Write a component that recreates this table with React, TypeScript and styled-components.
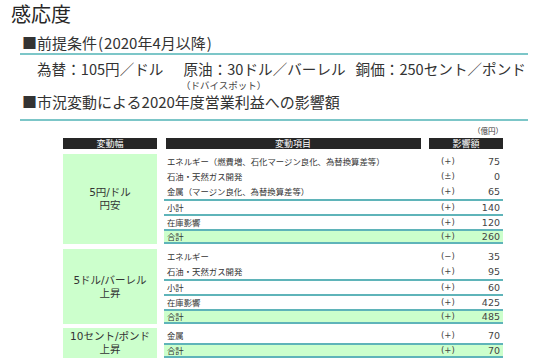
import React from "react";
import styled, { createGlobalStyle } from "styled-components";

const GlobalStyle = createGlobalStyle`
  html, body { margin: 0; padding: 0; background: #fff; }
  body {
    width: 538px;
    height: 361px;
    overflow: hidden;
    font-family: "DejaVu Sans", "Noto Sans CJK JP", sans-serif;
    color: #333;
  }
`;

const Page = styled.div`
  width: 538px;
  height: 361px;
  overflow: hidden;
  display: flex;
  flex-direction: column;
  background: #fff;
`;

const Title = styled.h1`
  margin: 0 0 0 11px;
  box-sizing: border-box;
  height: 26px;
  padding-top: 2px;
  font-family: "Noto Sans CJK JP", sans-serif;
  font-size: 20px;
  line-height: 24px;
  font-weight: normal;
  color: #262626;
`;

const SectionHead = styled.h2<{ $padTop: number; $padBottom: number }>`
  margin: 0 10px 0 20px;
  box-sizing: border-box;
  height: ${(p) => p.$padTop + p.$padBottom + 22}px;
  padding: ${(p) => p.$padTop}px 0 ${(p) => p.$padBottom}px 2px;
  font-family: "Noto Sans CJK JP", sans-serif;
  font-size: 15px;
  line-height: 20px;
  font-weight: normal;
  color: #333;
  white-space: nowrap;
  border-bottom: 2px solid #7cc6c8;
`;

const Paren = styled.span`
  margin: 0 1px;
`;

const Conditions = styled.div`
  box-sizing: border-box;
  height: 24px;
  padding: 4px 0 0 37px;
  font-family: "Noto Sans CJK JP", sans-serif;
  font-size: 14.6px;
  line-height: 20px;
  white-space: nowrap;
  color: #333;
`;

const Gap = styled.span<{ $w: number }>`
  display: inline-block;
  width: ${(p) => p.$w}px;
`;

const SubNote = styled.div`
  height: 12px;
  padding-left: 181px;
  font-family: "Noto Sans CJK JP", sans-serif;
  font-size: 9.5px;
  line-height: 12px;
  color: #444;
`;

const TableArea = styled.div`
  margin-left: 63px;
  width: 440px;
  display: flex;
  flex-direction: column;
`;

const Unit = styled.div`
  margin-top: 5px;
  height: 10px;
  text-align: right;
  font-family: "Noto Sans CJK JP", sans-serif;
  font-size: 7.5px;
  line-height: 10px;
  color: #333;
`;

const HeaderRow = styled.div`
  margin-top: 2px;
  height: 11px;
  display: grid;
  grid-template-columns: 94px 255px 74px;
  column-gap: 8.5px;
`;

const HeaderCell = styled.div`
  background: #262626;
  color: #fff;
  font-family: "Noto Sans CJK JP", sans-serif;
  font-size: 9px;
  line-height: 11px;
  height: 11px;
  text-align: center;
  overflow: hidden;
`;

const Group = styled.div<{ $top: number }>`
  margin-top: ${(p) => p.$top}px;
  display: grid;
  grid-template-columns: 94px 1fr;
  column-gap: 7px;
`;

const RangeCell = styled.div`
  background: #ccffcc;
  display: flex;
  flex-direction: column;
  align-items: center;
  justify-content: center;
  font-size: 10.5px;
  line-height: 13px;
  color: #333;
  white-space: nowrap;
`;

const Rows = styled.div`
  display: flex;
  flex-direction: column;
`;

const Row = styled.div<{ $line?: boolean; $total?: boolean }>`
  height: 15px;
  box-sizing: border-box;
  display: grid;
  grid-template-columns: 1fr 30px 32px;
  align-items: center;
  padding: 0 3px;
  border-top: ${(p) => (p.$line || p.$total ? "2px solid #5fb4b9" : "none")};
  border-bottom: ${(p) => (p.$total ? "2px solid #5fb4b9" : "none")};
  background: ${(p) => (p.$total ? "#ccffcc" : "transparent")};
`;

const Label = styled.span`
  font-family: "Noto Sans CJK JP", sans-serif;
  font-size: 8.4px;
  line-height: 11px;
  color: #333;
  white-space: nowrap;
`;

const Sign = styled.span`
  padding-left: 3px;
  font-size: 8.5px;
  line-height: 11px;
  color: #444;
  white-space: nowrap;
`;

const Value = styled.span`
  text-align: right;
  font-size: 9.5px;
  line-height: 11px;
  color: #444;
`;

type RowData = { label: string; sign: string; value: string; line?: boolean; total?: boolean };
type GroupData = { range: string[]; top: number; rows: RowData[] };

const groups: GroupData[] = [
  {
    range: ["5円/ドル", "円安"],
    top: 5,
    rows: [
      { label: "エネルギー（燃費増、石化マージン良化、為替換算差等）", sign: "(+)", value: "75" },
      { label: "石油・天然ガス開発", sign: "(±)", value: "0" },
      { label: "金属（マージン良化、為替換算差等）", sign: "(+)", value: "65" },
      { label: "小計", sign: "(+)", value: "140", line: true },
      { label: "在庫影響", sign: "(+)", value: "120", line: true },
      { label: "合計", sign: "(+)", value: "260", total: true },
    ],
  },
  {
    range: ["5ドル/バーレル", "上昇"],
    top: 5,
    rows: [
      { label: "エネルギー", sign: "(−)", value: "35" },
      { label: "石油・天然ガス開発", sign: "(+)", value: "95" },
      { label: "小計", sign: "(+)", value: "60", line: true },
      { label: "在庫影響", sign: "(+)", value: "425", line: true },
      { label: "合計", sign: "(+)", value: "485", total: true },
    ],
  },
  {
    range: ["10セント/ポンド", "上昇"],
    top: 4,
    rows: [
      { label: "金属", sign: "(+)", value: "70" },
      { label: "合計", sign: "(+)", value: "70", total: true },
    ],
  },
];

export default function App() {
  return (
    <Page>
      <GlobalStyle />
      <Title>感応度</Title>
      <SectionHead $padTop={7} $padBottom={0}>
        ■前提条件<Paren>(</Paren>2020年4月以降<Paren>)</Paren>
      </SectionHead>
      <Conditions>
        為替：105円／ドル
        <Gap $w={20} />
        原油：30ドル／バーレル
        <Gap $w={10} />
        銅価：250セント／ポンド
      </Conditions>
      <SubNote>（ドバイスポット）</SubNote>
      <SectionHead $padTop={1} $padBottom={7}>■市況変動による2020年度営業利益への影響額</SectionHead>
      <TableArea>
        <Unit>（億円）</Unit>
        <HeaderRow>
          <HeaderCell>変動幅</HeaderCell>
          <HeaderCell>変動項目</HeaderCell>
          <HeaderCell>影響額</HeaderCell>
        </HeaderRow>
        {groups.map((g, gi) => (
          <Group key={gi} $top={g.top}>
            <RangeCell>
              {g.range.map((t, i) => (
                <span key={i}>{t}</span>
              ))}
            </RangeCell>
            <Rows>
              {g.rows.map((r, ri) => (
                <Row key={ri} $line={r.line} $total={r.total}>
                  <Label>{r.label}</Label>
                  <Sign>{r.sign}</Sign>
                  <Value>{r.value}</Value>
                </Row>
              ))}
            </Rows>
          </Group>
        ))}
      </TableArea>
    </Page>
  );
}
